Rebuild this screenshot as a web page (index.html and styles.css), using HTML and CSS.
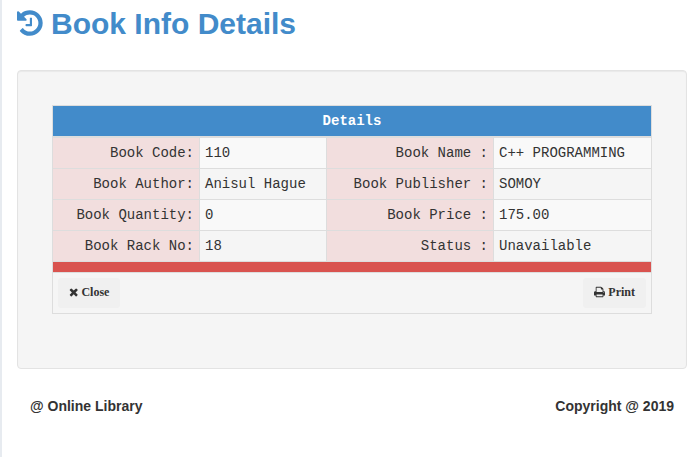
FILE: index.html
```html
<!DOCTYPE html>
<html lang="en">
<head>
<meta charset="utf-8">
<title>Book Info Details</title>
<link rel="stylesheet" href="styles.css">
</head>
<body>
<main class="page">
  <h1 class="title"><svg class="icon icon-history" viewBox="0 0 1536 1792" aria-hidden="true"><path d="M1536 896q0 156-61 298t-164 245-245 164-298 61q-172 0-327-72.5t-264-204.5q-7-10-6.5-22.5t8.5-20.5l137-138q10-9 25-9 16 2 23 12 73 95 179 147t225 52q104 0 198.5-40.5t163.5-109.5 109.5-163.5 40.5-198.5-40.5-198.5-109.5-163.5-163.5-109.5-198.5-40.5q-98 0-188 35.5t-160 101.5l137 138q31 30 14 69-17 40-59 40h-448q-26 0-45-19t-19-45v-448q0-42 40-59 39-17 69 14l130 129q107-101 244.5-156.5t284.5-55.5q156 0 298 61t245 164 164 245 61 298zm-640-288v448q0 14-9 23t-23 9h-320q-14 0-23-9t-9-23v-64q0-14 9-23t23-9h224v-352q0-14 9-23t23-9h64q14 0 23 9t9 23z"/></svg> Book Info Details</h1>
  <section class="well">
    <table class="details">
      <colgroup><col class="c1"><col class="c2"><col class="c3"><col class="c4"></colgroup>
      <thead><tr><th colspan="4">Details</th></tr></thead>
      <tbody>
        <tr><td class="label">Book Code:</td><td>110</td><td class="label">Book Name :</td><td>C++ PROGRAMMING</td></tr>
        <tr><td class="label">Book Author:</td><td>Anisul Hague</td><td class="label">Book Publisher :</td><td>SOMOY</td></tr>
        <tr><td class="label">Book Quantity:</td><td>0</td><td class="label">Book Price :</td><td>175.00</td></tr>
        <tr><td class="label">Book Rack No:</td><td>18</td><td class="label">Status :</td><td>Unavailable</td></tr>
      </tbody>
      <tfoot>
        <tr><td class="divider" colspan="4"></td></tr>
        <tr><td class="actions" colspan="4"><div class="buttons">
          <button class="btn" type="button"><svg class="icon icon-close" viewBox="0 0 1408 1792" aria-hidden="true"><path d="M1298 1322q0 40-28 68l-136 136q-28 28-68 28t-68-28l-294-294-294 294q-28 28-68 28t-68-28l-136-136q-28-28-28-68t28-68l294-294-294-294q-28-28-28-68t28-68l136-136q28-28 68-28t68 28l294 294 294-294q28-28 68-28t68 28l136 136q28 28 28 68t-28 68l-294 294 294 294q28 28 28 68z"/></svg> Close</button>
          <button class="btn" type="button"><svg class="icon icon-print" viewBox="0 0 1664 1792" aria-hidden="true"><path d="M384 1536h896v-256h-896v256zm0-640h896v-384h-160q-40 0-68-28t-28-68v-160h-640v640zm1152 64q0-26-19-45t-45-19-45 19-19 45 19 45 45 19 45-19 19-45zm128 0v416q0 13-9.5 22.5t-22.5 9.5h-224v160q0 40-28 68t-68 28h-960q-40 0-68-28t-28-68v-160h-224q-13 0-22.5-9.5t-9.5-22.5v-416q0-79 56.5-135.5t135.5-56.5h64v-544q0-40 28-68t68-28h672q40 0 88 20t76 48l152 152q28 28 48 76t20 88v256h64q79 0 135.5 56.5t56.5 135.5z"/></svg> Print</button>
        </div></td></tr>
      </tfoot>
    </table>
  </section>
  <footer class="footer"><span>@ Online Library</span><span>Copyright @ 2019</span></footer>
</main>
</body>
</html>
```
FILE: styles.css
```css
* { box-sizing: border-box; }

body {
  margin: 0;
  background: #fff;
  color: #333;
  font-family: "Liberation Sans", Arial, sans-serif;
  font-size: 14px;
  line-height: 20px;
}

.page {
  min-height: 457px;
  padding: 7px 8px 0 15px;
  border-left: 2px solid #e7ebf0;
}

.title {
  margin: 0 0 30px;
  color: #428bca;
  font-size: 30px;
  font-weight: bold;
  line-height: 33px;
}

.icon { fill: currentColor; }

.icon-history {
  width: 25.7px;
  height: 30px;
  vertical-align: -4px;
}

.well {
  height: 299px;
  padding: 34px;
  border: 1px solid #e3e3e3;
  border-radius: 4px;
  background: #f5f5f5;
  box-shadow: inset 0 1px 1px rgba(0, 0, 0, .05);
}

.details {
  width: 600px;
  table-layout: fixed;
  border-collapse: separate;
  border-spacing: 0;
  border: solid #ddd;
  border-width: 1px 0 0 1px;
  font-family: "Liberation Mono", "Courier New", monospace;
}

.c1 { width: 147px; }
.c2 { width: 127px; }
.c3 { width: 167px; }
.c4 { width: 158px; }

.details th,
.details td {
  padding: 5px;
  border: solid #ddd;
  border-width: 0 1px 1px 0;
  white-space: nowrap;
}

.details th {
  border-bottom-width: 2px;
  background: #428bca;
  color: #fff;
  text-align: center;
}

.details tbody tr:nth-child(odd) td { background: #f9f9f9; }

.details tbody td.label,
.details tbody tr:nth-child(odd) td.label {
  background: #f2dede;
  text-align: right;
}

.details td.divider {
  height: 11px;
  padding: 0;
  background: #d9534f;
}

.buttons {
  display: flex;
  justify-content: space-between;
}

.btn {
  height: 30px;
  padding: 4px 10px 6px;
  border: 1px solid #f0f0f0;
  border-radius: 3px;
  background: #f0f0f0;
  color: #333;
  font: bold 12px/18px "Liberation Serif", "Times New Roman", serif;
}

.icon-close {
  width: 9.43px;
  height: 12px;
  vertical-align: -2px;
}

.icon-print {
  width: 11.14px;
  height: 12px;
  vertical-align: -2px;
}

.footer {
  display: flex;
  justify-content: space-between;
  padding: 27px 13px 0;
  font-weight: bold;
}
```
